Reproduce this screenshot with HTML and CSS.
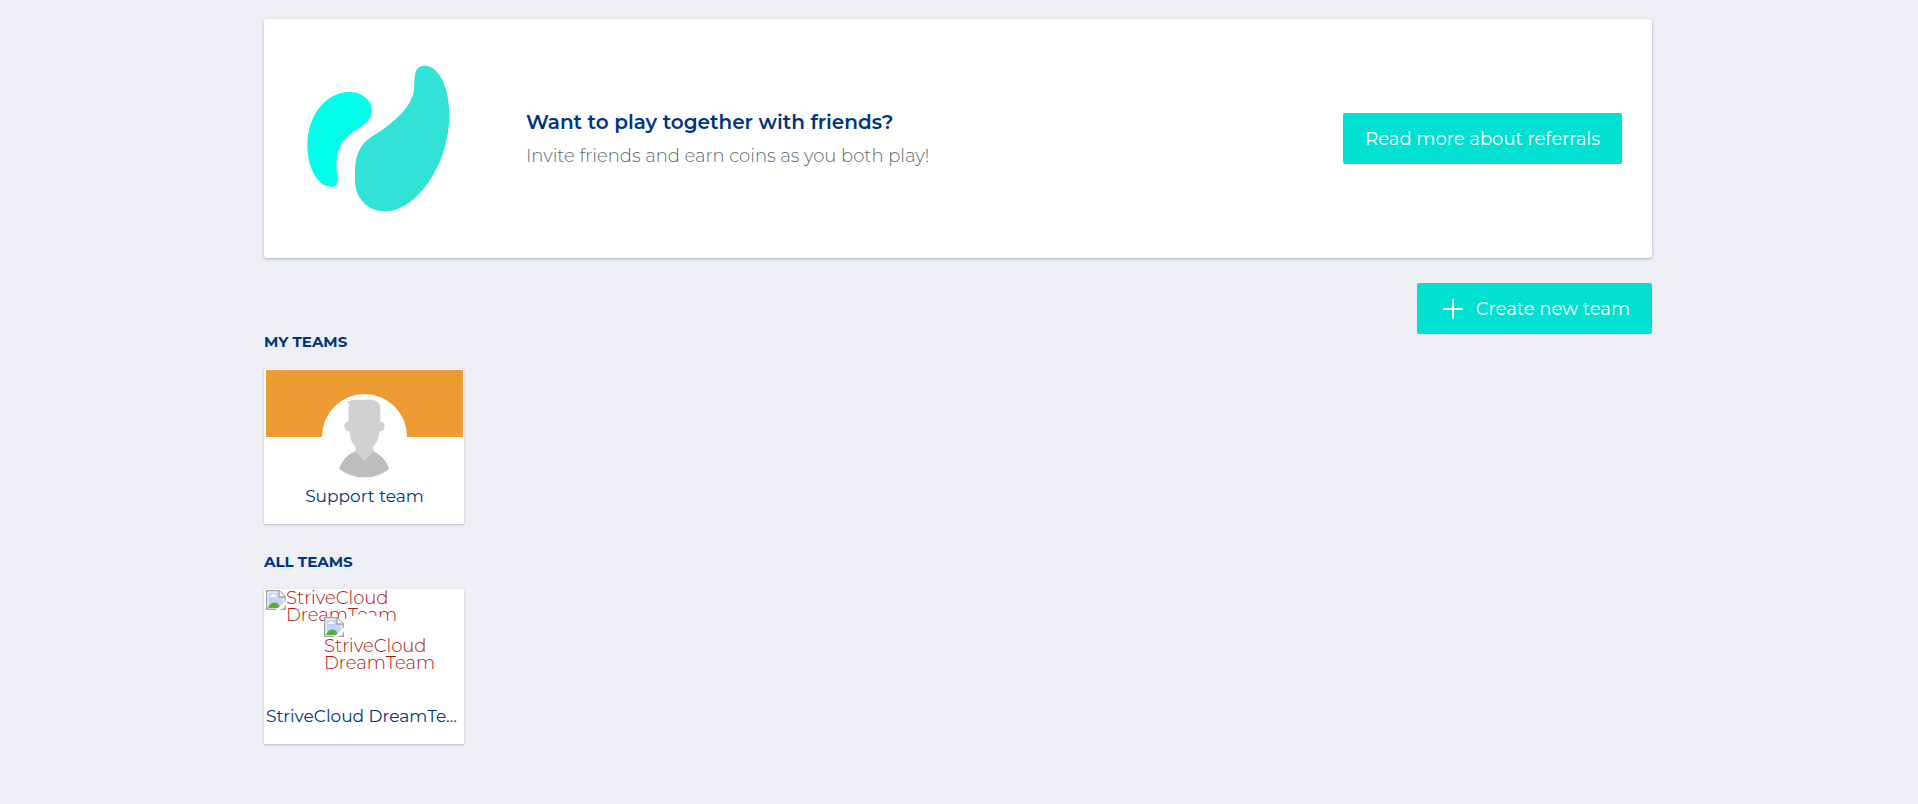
FILE: index.html
```html
<!DOCTYPE html>
<html lang="en">
<head>
  <meta charset="UTF-8" />
  <meta name="viewport" content="width=device-width, initial-scale=1.0"/>
  <title>Teams</title>
  <link rel="stylesheet" href="styles.css">
</head>
<body>
  <!-- shared icon for images that are missing -->
  <svg class="sprite" width="0" height="0" aria-hidden="true">
    <symbol id="missing" viewBox="0 0 20 20">
      <path d="M.7.7h12.500l6 6v12.600H.7z" fill="#c3d5f5" stroke="#a2a2a2" stroke-width="1.4"/>
      <path d="M2 2h11v5h5v11H2z" fill="none" stroke="#fff"/>
      <path d="M4 7q0-2 2-2 1-2 2.500 0 2 0 2 2z" fill="#fff"/>
      <path d="M2 18q2-5.500 6.500-5.500 4 0 6 5.500z" fill="#5aac3a"/>
      <path d="M13 .7v6.300h6" fill="#fff" stroke="#a2a2a2" stroke-width="1.4"/>
      <path d="M9 20.500L20.500 10v4L14 20.500z" fill="#fff"/>
    </symbol>
  </svg>

  <main class="container">
    <section class="banner">
      <svg class="banner-logo" viewBox="172 195 429 441" aria-hidden="true">
        <path fill="#00ffeb" d="M298 276C337 276 367 302 367 331C367 356 349 371 329 384C306 399 287 411 276 430C262 454 259 480 261 508C262 528 264 533 264 542C264 554 256 560 243 560C205 560 173 503 173 436C173 347 229 276 298 276Z"/>
        <path fill="#31e3d6" d="M525 197C566 197 599 258 599 344C599 493 501 634 406 634C354 634 316 594 316 540C316 499 314 475 335 440C352 413 378 405 410 380C447 352 478 320 489 287C496 265 492 247 496 224C499 206 509 197 525 197Z"/>
      </svg>
      <div class="banner-text">
        <h2>Want to play together with friends?</h2>
        <p>Invite friends and earn coins as you both play!</p>
      </div>
      <button type="button" class="btn">Read more about referrals</button>
    </section>

    <div class="actions">
      <button type="button" class="btn">
        <svg class="plus" viewBox="0 0 20 20" aria-hidden="true">
          <path d="M10 1v18M1 10h18" stroke="#fff" stroke-width="2" stroke-linecap="round"/>
        </svg>
        Create new team
      </button>
    </div>

    <section class="teams">
      <h3>MY TEAMS</h3>
      <a href="#" class="card">
        <div class="cover cover-orange"></div>
        <svg class="avatar" viewBox="216 222 255 255" aria-hidden="true">
          <circle cx="343.500" cy="349.500" r="127.500" fill="#fff"/>
          <path fill="#bcbdbf" d="M316 394Q282 407 267 446Q300 472 343 472Q386 472 418 446Q402 408 370 394L343 400Z"/>
          <path fill="#d0d1d3" d="M292 243Q300 245 306 239H364Q391 240 391 270V305Q404 305 404 319Q404 334 388 334Q387 362 370 379Q367 387 373 394L343 422L315 394Q320 386 315 379Q299 362 299 334Q283 334 283 319Q283 305 295 305V265Q299 253 292 243Z"/>
        </svg>
        <span class="name">Support team</span>
      </a>
    </section>

    <section class="teams">
      <h3>ALL TEAMS</h3>
      <a href="#" class="card">
        <div class="cover missing-text">
          <svg class="missing-icon" aria-hidden="true"><use href="#missing"/></svg>
          <span>StriveCloud DreamTeam</span>
        </div>
        <div class="avatar avatar-missing missing-text">
          <svg class="missing-icon" aria-hidden="true"><use href="#missing"/></svg>
          <span>StriveCloud DreamTeam</span>
        </div>
        <span class="name">StriveCloud DreamTeam</span>
      </a>
    </section>
  </main>
</body>
</html>
```

FILE: styles.css
```css
* {
  box-sizing: border-box;
}
body {
  margin: 0;
  background: #eeeff4;
  font-family: Montserrat, Inter, sans-serif;
  font-size: 18px;
  font-weight: 300;
}
h2, h3, p {
  margin: 0;
}
.sprite {
  position: absolute;
}
.container {
  max-width: 1390px;
  margin: 0 auto;
  padding: 19px 2px 0 0;
}
.banner {
  display: flex;
  align-items: center;
  padding: 46px 30px 46px 43px;
  background: #fff;
  border-radius: 3px;
  box-shadow: 0 1px 3px rgba(0, 30, 60, 0.3);
}
.banner-logo {
  width: 143px;
  height: 147px;
  flex: none;
}
.banner-text {
  flex: 1;
  padding-left: 76px;
}
.banner-text h2 {
  color: #003580;
  font-size: 20px;
  font-weight: 600;
  line-height: 34px;
}
.banner-text p {
  color: #5c6870;
  line-height: 34px;
}
.btn {
  display: flex;
  align-items: center;
  gap: 13px;
  height: 51px;
  padding: 0 22px;
  border: none;
  border-radius: 2px;
  background: #00e1d1;
  color: #fff;
  font-family: inherit;
  font-size: 18px;
  font-weight: 400;
  cursor: pointer;
}
.plus {
  width: 20px;
  height: 20px;
  margin-left: 4px;
}
.actions {
  display: flex;
  justify-content: flex-end;
  margin-top: 25px;
}
.teams {
  margin-bottom: 30px;
}
.teams h3 {
  margin-bottom: 19px;
  color: #003580;
  font-size: 15px;
  font-weight: 700;
  line-height: 16px;
}
.card {
  position: relative;
  display: block;
  width: 200px;
  height: 155px;
  padding: 1px 1px 0 2px;
  background: #fff;
  box-shadow: 0 1px 2px rgba(0, 30, 60, 0.25);
  color: #003580;
  text-decoration: none;
}
.cover {
  height: 67px;
  overflow: hidden;
}
.cover-orange {
  background: #ee9b33;
}
.avatar {
  position: absolute;
  top: 25px;
  left: 58px;
  width: 85px;
  height: 85px;
}
.name {
  display: block;
  margin-top: 48px;
  overflow: hidden;
  font-size: 17px;
  font-weight: 400;
  line-height: 22px;
  text-align: center;
  text-overflow: ellipsis;
  white-space: nowrap;
}
.missing-text {
  display: flex;
  color: #b5120a;
  line-height: 17px;
}
.missing-text span {
  max-width: 120px;
}
.missing-icon {
  width: 20px;
  height: 20px;
  flex: none;
}
.avatar-missing {
  flex-direction: column;
  gap: 1px;
  padding: 3px 2px;
  border-radius: 50%;
  background: #fff;
}
```
